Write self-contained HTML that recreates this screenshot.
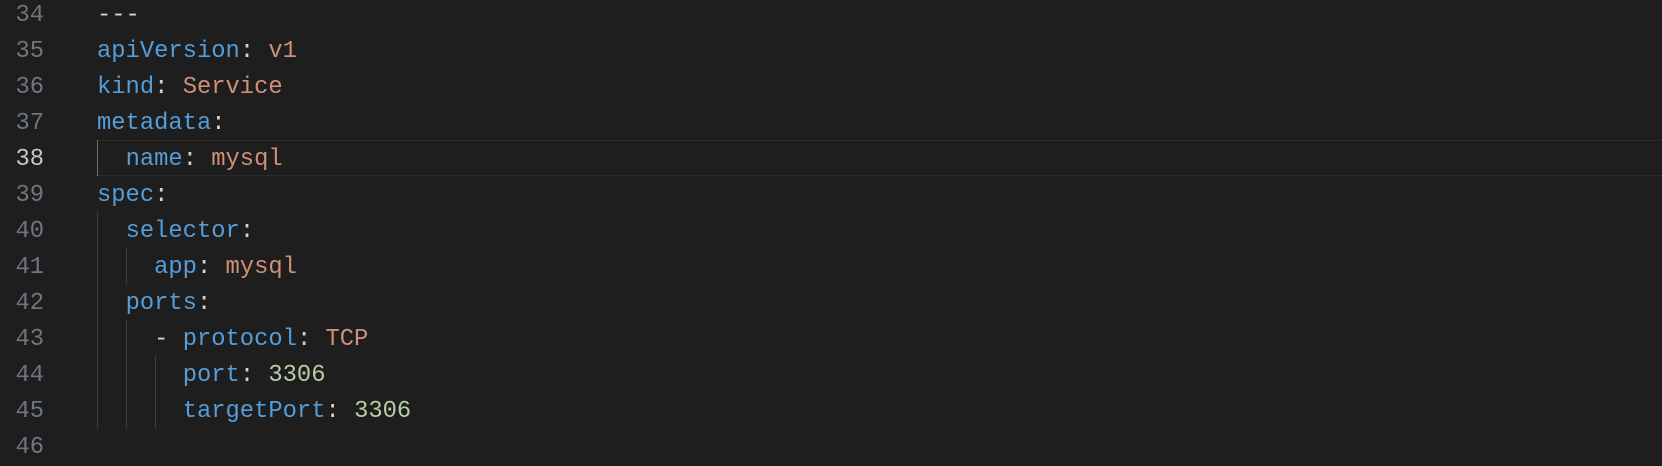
<!DOCTYPE html>
<html><head><style>
body{margin:0;width:1662px;height:450px;overflow:hidden;background:#1e1e1e;font-family:"Liberation Mono",monospace;font-size:23.8px;}
.l{position:absolute;left:0;height:36px;line-height:36px;width:1662px;white-space:pre;}
.n{position:absolute;right:1618px;color:#6e7681;text-align:right;}
.c{position:absolute;left:97px;color:#d4d4d4;}
.k{color:#569cd6}.s{color:#ce9178}.m{color:#b5cea8}.p{color:#d4d4d4}
.g{position:absolute;width:1px;background:#404040;}
.hl{position:absolute;left:97px;top:140px;width:1570px;height:34px;border:1px solid #2c2c2c;border-right:none;}
</style></head><body>
<div class="hl"></div>
<div class="g" style="left:97px;top:140px;height:36px;background:#707070"></div>
<div class="g" style="left:97px;top:212px;height:216px"></div>
<div class="g" style="left:126px;top:248px;height:36px"></div>
<div class="g" style="left:126px;top:320px;height:108px"></div>
<div class="g" style="left:155px;top:356px;height:72px"></div>
<div class="l" style="top:-2px"><span class="n">34</span><span class="c">---</span></div>
<div class="l" style="top:34px"><span class="n">35</span><span class="c"><span class="k">apiVersion</span>: <span class="s">v1</span></span></div>
<div class="l" style="top:70px"><span class="n">36</span><span class="c"><span class="k">kind</span>: <span class="s">Service</span></span></div>
<div class="l" style="top:106px"><span class="n">37</span><span class="c"><span class="k">metadata</span>:</span></div>
<div class="l" style="top:142px"><span class="n" style="color:#c6c6c6">38</span><span class="c">  <span class="k">name</span>: <span class="s">mysql</span></span></div>
<div class="l" style="top:178px"><span class="n">39</span><span class="c"><span class="k">spec</span>:</span></div>
<div class="l" style="top:214px"><span class="n">40</span><span class="c">  <span class="k">selector</span>:</span></div>
<div class="l" style="top:250px"><span class="n">41</span><span class="c">    <span class="k">app</span>: <span class="s">mysql</span></span></div>
<div class="l" style="top:286px"><span class="n">42</span><span class="c">  <span class="k">ports</span>:</span></div>
<div class="l" style="top:322px"><span class="n">43</span><span class="c">    - <span class="k">protocol</span>: <span class="s">TCP</span></span></div>
<div class="l" style="top:358px"><span class="n">44</span><span class="c">      <span class="k">port</span>: <span class="m">3306</span></span></div>
<div class="l" style="top:394px"><span class="n">45</span><span class="c">      <span class="k">targetPort</span>: <span class="m">3306</span></span></div>
<div class="l" style="top:430px"><span class="n">46</span></div>
</body></html>
